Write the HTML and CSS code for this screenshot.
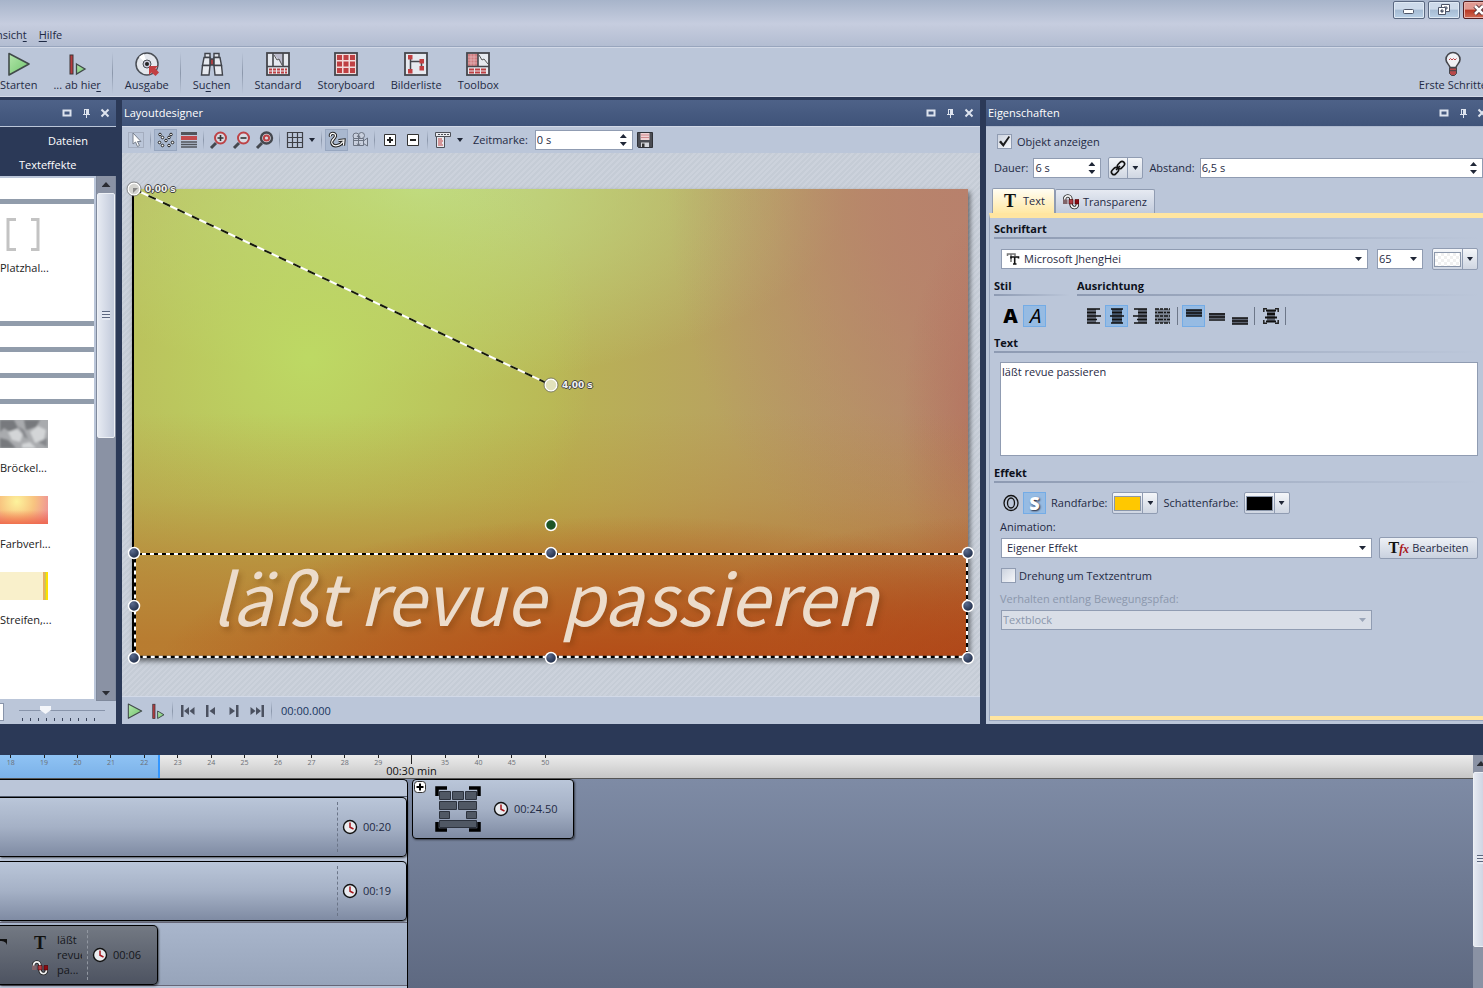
FILE: index.html
```html
<!DOCTYPE html>
<html lang="de">
<head>
<meta charset="utf-8">
<title>Layoutdesigner</title>
<link rel="stylesheet" href="styles.css">
</head>
<body>
<svg class="defs" aria-hidden="true">
  <defs>
    <linearGradient id="green" x1="0" y1="0" x2="1" y2="1"><stop offset="0" stop-color="#b4e6ab"/><stop offset="1" stop-color="#6fc46c"/></linearGradient>
    <radialGradient id="navy" cx=".35" cy=".3" r=".8"><stop offset="0" stop-color="#5a6b8e"/><stop offset="1" stop-color="#18243f"/></radialGradient>
    <symbol id="play" viewBox="0 0 24 24"><path d="M2 1.500 22 12 2 23Z" fill="url(#green)" stroke="#414a4a" stroke-width="1.600" stroke-linejoin="round"/></symbol>
    <symbol id="playfrom" viewBox="0 0 24 24"><rect x="5" y="3" width="3" height="19" fill="#b83c3f" stroke="#3d3437"/><path d="M11.500 12 20 17 11.500 22Z" fill="url(#green)" stroke="#414a4a" stroke-width="1.300"/></symbol>
    <symbol id="max" viewBox="0 0 12 12"><rect x="2.500" y="3.500" width="7" height="5" fill="none" stroke="#dde3ee" stroke-width="2"/></symbol>
    <symbol id="pin" viewBox="0 0 12 12"><path d="M4 2h5v5h1v1H3V7h1ZM6 8h1v3H6Z" fill="#dde3ee"/><path d="M5.500 3v4" stroke="#455a80"/></symbol>
    <symbol id="close" viewBox="0 0 12 12"><path d="M2.500 2.500 9.500 9.500M9.500 2.500 2.500 9.500" stroke="#dde3ee" stroke-width="2"/></symbol>
    <symbol id="clock" viewBox="0 0 16 16"><circle cx="8" cy="8" r="6.500" fill="#e9ebef" stroke="#111" stroke-width="1.400"/><path d="M8 3.500V8.200L11.500 10" fill="none" stroke="#a8171c" stroke-width="1.500"/></symbol>
    <symbol id="wave" viewBox="0 0 16 16"><path d="M1.500 6C1.500 .5 8 .5 8 6v3c0 6 6.500 6 6.500 1" fill="none" stroke="#222" stroke-width="3.400"/><path d="M1.500 6C1.500 .5 8 .5 8 6v3c0 6 6.500 6 6.500 1" fill="none" stroke="#f2f2f2" stroke-width="1.800"/><path d="M0 5.500h4.500V10H0Z" fill="#80656a"/><path d="M6 5.500h4V10H6Z" fill="#b03a40" stroke="#400" stroke-width=".6"/><path d="M12 5.500h4V10h-4Z" fill="#8c0a12" stroke="#400" stroke-width=".6"/></symbol>
    <symbol id="handle" viewBox="0 0 14 14"><circle cx="7" cy="7" r="5.500" fill="url(#navy)" stroke="#fff" stroke-width="1.500"/></symbol>
  </defs>
</svg>

<header class="top">
  <nav class="menu"><a href="#">nsich<u>t</u></a><a href="#"><u>H</u>ilfe</a></nav>
  <div class="winbtns">
    <button class="win" aria-label="Minimieren"><svg width="14" height="12" viewBox="0 0 14 12"><rect x="1.500" y="5.500" width="10" height="4" rx="1" fill="#fff" stroke="#4d5568"/></svg></button>
    <button class="win" aria-label="Wiederherstellen"><svg width="14" height="12" viewBox="0 0 14 12"><path d="M4.500 .5h8v7h-8ZM7 3h3v2H7Z" fill="#fff" fill-rule="evenodd" stroke="#4d5568"/><path d="M1.500 3.500h7v7h-7ZM4 6h2v2H4Z" fill="#fff" fill-rule="evenodd" stroke="#4d5568"/></svg></button>
    <button class="win red" aria-label="Schließen"><svg width="14" height="12" viewBox="0 0 14 12"><path d="m3 2 8 8M11 2l-8 8" stroke="#54343a" stroke-width="4.500"/><path d="m3 2 8 8M11 2l-8 8" stroke="#fff" stroke-width="2.500"/></svg></button>
  </div>
</header>

<div class="toolbar">
  <button class="tool"><svg width="24" height="24"><use href="#play"/></svg><span>Starten</span></button>
  <button class="tool"><svg width="24" height="24"><use href="#playfrom"/></svg><span>... ab hie<u>r</u></span></button>
  <i class="sep"></i>
  <button class="tool"><svg width="24" height="24" viewBox="0 0 24 24"><circle cx="12" cy="12" r="11" fill="#e4e7ed" stroke="#4a4e55" stroke-width="1.500"/><path d="M12 12 4 5a11 11 0 0 1 5-3ZM12 12l8 7 2-4Z" fill="#fff"/><circle cx="12" cy="12" r="4" fill="#ccd" stroke="#4a4e55"/><circle cx="12" cy="12" r="2" fill="#222"/><path d="M14 14h9l-2.500 2.500 3.500 4-3.500 3.500-4-3.500-2.500 2.500Z" fill="#c23f42"/></svg><span>Aus<u>g</u>abe</span></button>
  <i class="sep"></i>
  <button class="tool"><svg width="24" height="24" viewBox="0 0 24 24" fill="#e6e9ef" stroke="#3f4249" stroke-width="1.400"><path d="M5 1.500h5v4H5ZM14 1.500h5v4h-5Z"/><path d="M4 5.500h6v8H2.500ZM14 5.500h6l1.500 8H14Z"/><path d="M2.500 13.500H10L9 23H1.500ZM14 13.500h7.500l1 9.500H15Z"/><path d="M10.500 7h3v6h-3Z" fill="#c23f42"/></svg><span>Su<u>c</u>hen</span></button>
  <i class="sep"></i>
  <button class="tool"><svg width="24" height="24" viewBox="0 0 24 24"><rect x="1" y="1" width="22" height="22" fill="#e6e9ef" stroke="#45464c" stroke-width="1.800"/><path d="M7 1v13M17 1v13M1 14.500h22" stroke="#45464c" stroke-width="1.600"/><path d="M8 2h8v11Z" fill="#bbc"/><path d="m8 3 3 5 2-1 3 6" fill="none" stroke="#555"/><path d="M3 17.500h18M3 20.500h18" stroke="#bf4043" stroke-width="2" stroke-dasharray="3 1"/></svg><span>Standard</span></button>
  <button class="tool"><svg width="24" height="24" viewBox="0 0 24 24"><rect x="1" y="1" width="22" height="22" fill="#f1dada" stroke="#45464c" stroke-width="1.800"/><path d="M5.500 3v18M12 3v18M18.500 3v18" stroke="#bf4043" stroke-width="5" stroke-dasharray="5 1.500"/></svg><span>Storyboard</span></button>
  <button class="tool"><svg width="24" height="24" viewBox="0 0 24 24"><rect x="1" y="1" width="22" height="22" fill="#e6e9ef" stroke="#45464c" stroke-width="1.800"/><path d="M6.500 5v14M6.500 9.500h11V15" fill="none" stroke="#45464c" stroke-width="1.500"/><path d="M4 3h4.500v4.500H4ZM4 17h4.500v4.500H4ZM15.500 7H20v4.500h-4.500ZM15.500 14H20v4.500h-4.500Z" fill="#c23f42"/></svg><span>Bilderliste</span></button>
  <button class="tool"><svg width="24" height="24" viewBox="0 0 24 24"><rect x="1" y="1" width="22" height="22" fill="#e6e9ef" stroke="#45464c" stroke-width="1.800"/><path d="M2 2h10v12H2Z" fill="#cf7d80"/><path d="M2 5h10M2 8h10M2 11h10M5 2v12M8 2v12" stroke="#eac4c6" stroke-width=".6"/><path d="M12 1v13M1 14.500h22" stroke="#45464c" stroke-width="1.600"/><path d="m13 3 3 5 2-1 4 5" fill="none" stroke="#555"/><path d="M3 17.500h18M3 20.500h18" stroke="#bf4043" stroke-width="2" stroke-dasharray="5 1"/></svg><span>Toolbox</span></button>
  <button class="tool last"><svg width="24" height="24" viewBox="0 0 24 24"><path d="M9 15.500C8 12 5 11 5 7.500a7 7 0 0 1 14 0c0 3.500-3 4.500-4 8Z" fill="#f0f1f5" stroke="#45464c" stroke-width="1.600"/><path d="m8 8 1.500-1.500L11 8l1.500-1.500L14 8l1.500-1.500" fill="none" stroke="#bf4043"/><path d="M8.500 16h7v5.500l-2 2h-3l-2-2Z" fill="#b8494b" stroke="#45464c"/><path d="M9 18.700h6" stroke="#45464c"/></svg><span>Erste Schritte</span></button>
</div>

<main class="work">
  <section class="panel left">
    <div class="title"><span></span><div class="tbtns"><button aria-label="Maximieren"><svg width="12" height="12"><use href="#max"/></svg></button><button aria-label="Anheften"><svg width="12" height="12"><use href="#pin"/></svg></button><button aria-label="Schließen"><svg width="12" height="12"><use href="#close"/></svg></button></div></div>
    <nav class="cats"><a href="#" class="c1">Dateien</a><a href="#" class="c2">Texteffekte</a></nav>
    <div class="lib">
      <div class="list">
        <div class="grp small"></div>
        <div class="grp place"><svg width="48" height="38" viewBox="0 0 48 38"><path d="M16 3.500H8v30h8M31 3.500h7v30h-7" fill="none" stroke="#c3c3c3" stroke-width="3"/></svg><span>Platzhal...</span></div>
        <div class="grp small"></div>
        <div class="grp small"></div>
        <div class="grp small"></div>
        <div class="grp items">
          <figure><svg class="thumb" width="48" height="28" viewBox="0 0 48 28"><defs><filter id="soft"><feGaussianBlur stdDeviation="1"/></filter></defs><rect width="48" height="28" fill="#a9abae"/><g filter="url(#soft)"><path d="M0 0h14l4 8-8 4-6-4-4 4ZM0 18l8 2 8 8H0ZM24 0h16l-4 7-10 3Z" fill="#77797d"/><path d="M8 12l9-3 6 5-3 8-8-2ZM30 12l8-6 8 4-2 10-9 3ZM22 24l8-2 6 6H22Z" fill="#d3d5d7"/><path d="M18 6l6 4 4 9-4-2ZM38 22l9-4v9Z" fill="#85878b"/></g></svg><figcaption>Bröckel...</figcaption></figure>
          <figure><div class="thumb warm"></div><figcaption>Farbverl...</figcaption></figure>
          <figure><div class="thumb stripe"></div><figcaption>Streifen,...</figcaption></figure>
        </div>
      </div>
      <div class="vbar"><button class="arr up" aria-label="Nach oben"></button><div class="vthumb"><i></i></div><button class="arr down" aria-label="Nach unten"></button></div>
    </div>
    <div class="lfoot"><i class="box"></i><div class="zoom"><input type="range" min="0" max="100" value="28" aria-label="Vorschaugröße"><i class="ticks"></i></div></div>
  </section>

  <section class="panel center">
    <div class="title"><span>Layoutdesigner</span><div class="tbtns"><button aria-label="Maximieren"><svg width="12" height="12"><use href="#max"/></svg></button><button aria-label="Anheften"><svg width="12" height="12"><use href="#pin"/></svg></button><button aria-label="Schließen"><svg width="12" height="12"><use href="#close"/></svg></button></div></div>
    <div class="bar">
      <button class="ib" aria-label="Auswahl"><svg width="16" height="16" viewBox="0 0 16 16"><rect x=".5" y=".5" width="15" height="15" fill="none" stroke="#8c95a5" stroke-dasharray="1 1"/><path d="M5 1v11l2.500-2 2 4.500 2-1-2-4H13Z" fill="#fff" stroke="#777f8d"/></svg></button>
      <i class="sep"></i>
      <button class="ib on" aria-label="Punkte"><svg width="18" height="16" viewBox="0 0 18 16" fill="#fff" stroke="#222"><circle cx="3" cy="2.500" r="1.300"/><circle cx="14" cy="2.500" r="1.300"/><circle cx="5.500" cy="5.500" r="1.300"/><circle cx="12" cy="5.500" r="1.300"/><circle cx="9" cy="8.500" r="1.300"/><circle cx="2.500" cy="10.500" r="1.300"/><circle cx="15.500" cy="10.500" r="1.300"/><circle cx="5.500" cy="13.500" r="1.300"/><circle cx="12" cy="13.500" r="1.300"/></svg></button>
      <button class="ib" aria-label="Spuren"><svg width="16" height="16" viewBox="0 0 16 16"><path d="M0 0h16v3H0Z" fill="#51545b"/><path d="M0 4h16v4H0Z" fill="#c34a4d"/><path d="M0 10h16M0 12.500h16M0 15h16" stroke="#51545b" stroke-width="1.500"/></svg></button>
      <i class="sep"></i>
      <button class="ib" aria-label="Vergrößern"><svg width="18" height="18" viewBox="0 0 18 18"><path d="m6 12-5 5" stroke="#45484f" stroke-width="3"/><circle cx="10.500" cy="7" r="5.500" fill="#d8dbe3" stroke="#bd4246" stroke-width="2"/><path d="M7.500 7h6M10.500 4v6" stroke="#333" stroke-width="1.600"/></svg></button>
      <button class="ib" aria-label="Verkleinern"><svg width="18" height="18" viewBox="0 0 18 18"><path d="m6 12-5 5" stroke="#45484f" stroke-width="3"/><circle cx="10.500" cy="7" r="5.500" fill="#d8dbe3" stroke="#bd4246" stroke-width="2"/><path d="M7.500 7h6" stroke="#333" stroke-width="1.600"/></svg></button>
      <button class="ib" aria-label="Einpassen"><svg width="18" height="18" viewBox="0 0 18 18"><path d="m6 12-5 5" stroke="#45484f" stroke-width="3"/><circle cx="10.500" cy="7" r="5.500" fill="#d8dbe3" stroke="#45484f" stroke-width="2.400"/><circle cx="10.500" cy="7" r="2.600" fill="none" stroke="#bd4246" stroke-width="2"/></svg></button>
      <i class="sep"></i>
      <button class="ib" aria-label="Raster"><svg width="16" height="16" viewBox="0 0 16 16"><path d="M.5 .5h15v15H.5ZM5.500 0v16M10.500 0v16M0 5.500h16M0 10.500h16" fill="none" stroke="#3e4046" stroke-width="1.200"/></svg></button>
      <button class="car" aria-label="Rasteroptionen"></button>
      <i class="sep"></i>
      <button class="ib on" aria-label="Pfad"><svg width="18" height="16" viewBox="0 0 18 16"><path d="M2.500 4.500C1 .5 8 .5 7.500 4 7 7 2.500 8 4 11.500s8 3 11-2M10.500 8.500l5.500-.5-.5 5.500" fill="none" stroke="#222" stroke-width="3.200"/><path d="M2.500 4.500C1 .5 8 .5 7.500 4 7 7 2.500 8 4 11.500s8 3 11-2M10.500 8.500l5.500-.5-.5 5.500" fill="none" stroke="#fff" stroke-width="1.200"/></svg></button>
      <button class="ib" aria-label="Kamera"><svg width="16" height="16" viewBox="0 0 16 16" fill="#c9d0de" stroke="#6b7382"><circle cx="4" cy="4" r="3"/><circle cx="9.500" cy="3.500" r="3"/><path d="M1.500 6.500h10v7h-10ZM11.500 9l4-3v8l-4-2.500"/><path d="M2 8.500h9M6.500 3v10M5 5l1.500-2L8 5M5 11.500l1.500 2 1.500-2" fill="none"/></svg></button>
      <i class="sep"></i>
      <button class="ib" aria-label="Punkt hinzufügen"><svg width="12" height="12" viewBox="0 0 12 12"><path d="M.5.500h11v11H.5Z" fill="#fff" stroke="#333"/><path d="M3 6h6M6 3v6" stroke="#222" stroke-width="2"/></svg></button>
      <button class="ib" aria-label="Punkt entfernen"><svg width="12" height="12" viewBox="0 0 12 12"><path d="M.5.500h11v11H.5Z" fill="#fff" stroke="#333"/><path d="M3 6h6" stroke="#222" stroke-width="2"/></svg></button>
      <i class="sep"></i>
      <button class="ib" aria-label="Ausrichten"><svg width="16" height="16" viewBox="0 0 16 16" fill="#e9ebf0" stroke="#4d5058"><path d="M.5.500h15v4H.5Z"/><path d="M3 2.500h11" stroke-dasharray="2 1"/><path d="M1.500 4.500h8v11h-8Z"/><path d="M3 7h4M3 9h5M3 11h4M3 13h5" stroke="#bf4043"/></svg></button>
      <button class="car" aria-label="Ausrichtungsoptionen"></button>
      <label class="zm" for="zeit">Zeitmarke:</label>
      <span class="spin w1"><input id="zeit" type="text" value="0 s"><i></i></span>
      <button class="ib" aria-label="Speichern"><svg width="16" height="16" viewBox="0 0 16 16"><path d="M.5.500h15v15h-14l-1-1Z" fill="#4a4c53" stroke="#303238"/><path d="M3.500 1h9v7h-9Z" fill="#f1d3d5"/><path d="M4 3h8M4 5.500h8" stroke="#d08a8e"/><path d="M4 10.500h8V15H4Z" fill="#d4d6db"/><path d="M5 11.500h2.500V15H5Z" fill="#333"/></svg></button>
    </div>
    <div class="stage">
      <div class="picture">
        <svg class="path" width="100%" height="100%" aria-hidden="true"><line x1="0" y1="0" x2="50%" y2="42%" stroke="#fff" stroke-width="2"/><line x1="0" y1="0" x2="50%" y2="42%" stroke="#161a08" stroke-width="2" stroke-dasharray="8 8" stroke-dashoffset="-16"/></svg>
        <svg class="node n0" width="16" height="16" viewBox="0 0 16 16"><circle cx="8" cy="8" r="6" fill="#d4d4d0" stroke="#fff" stroke-width="1.500"/><circle cx="8" cy="8" r="7" fill="none" stroke="#666" stroke-width=".7"/><path d="M7 7h5l-5 5Z" fill="#888"/></svg><span class="time t0">0,00 s</span>
        <svg class="node n1" width="16" height="16" viewBox="0 0 16 16"><circle cx="8" cy="8" r="6" fill="#e2e2bc" stroke="#fff" stroke-width="1.500"/><circle cx="8" cy="8" r="7" fill="none" stroke="#666" stroke-width=".7"/></svg><span class="time t1">4,00 s</span>
        <svg class="node rot" width="14" height="14" viewBox="0 0 14 14"><circle cx="7" cy="7" r="5.500" fill="#1d5527" stroke="#fff" stroke-width="1.500"/></svg>
        <div class="selection">
          <svg class="marq" width="100%" height="100%" aria-hidden="true"><rect width="100%" height="100%" fill="none" stroke="#000" stroke-width="4"/><rect width="100%" height="100%" fill="none" stroke="#fff" stroke-width="4" stroke-dasharray="4 4"/></svg>
          <p class="caption">läßt revue passieren</p>
          <svg class="h a" width="14" height="14"><use href="#handle"/></svg><svg class="h b" width="14" height="14"><use href="#handle"/></svg><svg class="h c" width="14" height="14"><use href="#handle"/></svg><svg class="h d" width="14" height="14"><use href="#handle"/></svg><svg class="h e" width="14" height="14"><use href="#handle"/></svg><svg class="h f" width="14" height="14"><use href="#handle"/></svg><svg class="h g" width="14" height="14"><use href="#handle"/></svg><svg class="h i" width="14" height="14"><use href="#handle"/></svg>
        </div>
      </div>
    </div>
    <div class="player">
      <button class="ib" aria-label="Abspielen"><svg width="16" height="16"><use href="#play"/></svg></button>
      <button class="ib" aria-label="Ab hier abspielen"><svg width="18" height="18"><use href="#playfrom"/></svg></button>
      <i class="sep"></i>
      <button class="ib" aria-label="Anfang"><svg width="14" height="12" viewBox="0 0 14 12" fill="#4b5160"><path d="M0 0h2.500v12H0ZM8 2v8L3 6ZM13.500 2v8l-5-4Z"/></svg></button>
      <button class="ib" aria-label="Zurück"><svg width="10" height="12" viewBox="0 0 10 12" fill="#4b5160"><path d="M0 0h2.500v12H0ZM9 2v8L3.500 6Z"/></svg></button>
      <button class="ib" aria-label="Vor"><svg width="10" height="12" viewBox="0 0 10 12" fill="#4b5160"><path d="M7 0h2.500v12H7ZM.5 2v8L6 6Z"/></svg></button>
      <button class="ib" aria-label="Ende"><svg width="14" height="12" viewBox="0 0 14 12" fill="#4b5160"><path d="M11.500 0H14v12h-2.500ZM.5 2v8l5-4ZM6 2v8l5-4Z"/></svg></button>
      <i class="sep"></i>
      <span class="tc">00:00.000</span>
    </div>
  </section>

  <section class="panel right">
    <div class="title"><span>Eigenschaften</span><div class="tbtns"><button aria-label="Maximieren"><svg width="12" height="12"><use href="#max"/></svg></button><button aria-label="Anheften"><svg width="12" height="12"><use href="#pin"/></svg></button><button aria-label="Schließen"><svg width="12" height="12"><use href="#close"/></svg></button></div></div>
    <div class="props">
      <label class="chk show"><input type="checkbox" checked>Objekt anzeigen</label>
      <div class="row dur">
        <label for="dauer">Dauer:</label><span class="spin w2"><input id="dauer" type="text" value="6 s"><i></i></span>
        <button class="split" aria-label="Verketten"><svg width="18" height="18" viewBox="0 0 18 18" fill="none"><g stroke="#111" stroke-width="1.600"><rect x="-4" y="-2.500" width="8" height="5" rx="2.500" transform="translate(12 6) rotate(-45)"/><rect x="-4" y="-2.500" width="8" height="5" rx="2.500" transform="translate(6 12) rotate(-45)"/></g><path d="m7 11 4-4" stroke="#111" stroke-width="1.600"/></svg><i class="dd"></i></button>
        <label for="abst">Abstand:</label><span class="spin grow"><input id="abst" type="text" value="6,5 s"><i></i></span>
      </div>
      <div class="tabs"><button class="tab act"><b class="serif">T</b>Text</button><button class="tab"><svg width="16" height="16"><use href="#wave"/></svg>Transparenz</button></div>
      <div class="page">
        <h2>Schriftart</h2>
        <div class="row font">
          <span class="sel grow"><svg class="tt" width="12" height="12" viewBox="0 0 12 12"><path d="M.5 3V1H8v2M4 1v8" fill="none" stroke="#777" stroke-width="1.500"/><path d="M4 5.500V4h7.500v1.500M7.700 4v7M6 11h3.500" fill="none" stroke="#111" stroke-width="1.600"/></svg><select class="withicon" aria-label="Schriftart"><option>Microsoft JhengHei</option></select></span>
          <span class="sel size"><select aria-label="Schriftgröße"><option>65</option></select></span>
          <button class="split" aria-label="Textfarbe"><i class="sw check"></i><i class="dd"></i></button>
        </div>
        <div class="cols">
          <div><h2>Stil</h2><div class="row btns st"><button class="ib fat">A</button><button class="ib sel1 ita">A</button></div></div>
          <div><h2>Ausrichtung</h2><div class="row btns al">
            <button class="ib" aria-label="Links"><svg width="14" height="16" viewBox="0 0 14 16"><path d="M0 1h9v14H0Z" fill="#5d6370"/><path d="M0 1h13M0 4.500h9M0 8h14M0 11.500h10M0 15h13" stroke="#101010" stroke-width="1.700"/></svg></button>
            <button class="ib sel1" aria-label="Zentriert"><svg width="14" height="16" viewBox="0 0 14 16"><path d="M2 1h10v14H2Z" fill="#44566c"/><path d="M1 1h12M2 4.500h10M0 8h14M2 11.500h10M1 15h12" stroke="#101010" stroke-width="1.700"/></svg></button>
            <button class="ib" aria-label="Rechts"><svg width="14" height="16" viewBox="0 0 14 16"><path d="M5 1h9v14H5Z" fill="#5d6370"/><path d="M1 1h13M5 4.500h9M0 8h14M4 11.500h10M1 15h13" stroke="#101010" stroke-width="1.700"/></svg></button>
            <button class="ib" aria-label="Blocksatz"><svg width="15" height="16" viewBox="0 0 15 16"><path d="M0 1h15v14H0Z" fill="#7c8492"/><path d="M0 1h15M0 8h15M0 15h15" stroke="#151515" stroke-width="1.700" stroke-dasharray="4 1 3 1"/><path d="M0 4.500h15M0 11.500h15" stroke="#151515" stroke-width="1.700" stroke-dasharray="2 1 5 1"/></svg></button>
            <i class="bar1"></i>
            <button class="ib sel1" aria-label="Oben"><svg width="16" height="16" viewBox="0 0 16 16"><path d="M0 2h16v6H0Z" fill="#44566c"/><path d="M0 2h16M0 5h16M0 8h16" stroke="#101010" stroke-width="1.600"/></svg></button>
            <button class="ib" aria-label="Mitte"><svg width="16" height="16" viewBox="0 0 16 16"><path d="M0 5h16v6H0Z" fill="#5d6370"/><path d="M0 6h16M0 9h16M0 12h16" stroke="#101010" stroke-width="1.600"/></svg></button>
            <button class="ib" aria-label="Unten"><svg width="16" height="16" viewBox="0 0 16 16"><path d="M0 10h16v6H0Z" fill="#5d6370"/><path d="M0 10h16M0 13h16M0 16h16" stroke="#101010" stroke-width="1.600"/></svg></button>
            <i class="bar1"></i>
            <button class="ib" aria-label="Einpassen"><svg width="16" height="16" viewBox="0 0 16 16"><path d="M.8 4V.8H4M12 .8h3.200V4M.8 12v3.200H4M12 15.200h3.200V12" fill="none" stroke="#222" stroke-width="1.500"/><path d="M4 2h8v12H4Z" fill="#5d6370"/><path d="M3 2.500h10M4 6h8M2 9.500h12M3 13.500h10" stroke="#101010" stroke-width="1.800"/></svg></button>
            <i class="bar1"></i>
          </div></div>
        </div>
        <h2>Text</h2>
        <textarea aria-label="Text">läßt revue passieren</textarea>
        <h2>Effekt</h2>
        <div class="row eff">
          <button class="ib" aria-label="Rand"><svg width="16" height="18" viewBox="0 0 16 18" fill="none" stroke="#111"><ellipse cx="8" cy="9" rx="7" ry="7.500" stroke-width="1.300"/><ellipse cx="8" cy="9" rx="3.500" ry="5" stroke-width="1.300"/></svg></button><button class="ib sel1 shadow">S</button>
          <span class="lb">Randfarbe:</span><button class="split" aria-label="Randfarbe"><i class="sw gold"></i><i class="dd"></i></button>
          <span class="lb">Schattenfarbe:</span><button class="split" aria-label="Schattenfarbe"><i class="sw black"></i><i class="dd"></i></button>
        </div>
        <label class="cap" for="anim">Animation:</label>
        <div class="row an"><span class="sel grow"><select id="anim" class="ind"><option>Eigener Effekt</option></select></span><button class="push"><span class="tfx">T<em>fx</em></span>Bearbeiten</button></div>
        <label class="chk rotc"><input type="checkbox">Drehung um Textzentrum</label>
        <label class="cap off" for="verh">Verhalten entlang Bewegungspfad:</label>
        <div class="row an"><span class="sel grow dis"><select id="verh" disabled><option>Textblock</option></select></span><span class="ghost"></span></div>
      </div>
    </div>
  </section>
</main>

<section class="timeline">
  <div class="tl">
    <div class="ruler">
      <div class="played"></div>
      <div class="marks"><span>18</span><span>19</span><span>20</span><span>21</span><span>22</span><span>23</span><span>24</span><span>25</span><span>26</span><span>27</span><span>28</span><span>29</span><span class="major">00:30 min</span><span>35</span><span>40</span><span>45</span><span>50</span></div>
    </div>
    <div class="tracks">
      <div class="group">
        <div class="strip"></div>
        <div class="clip full"><div class="dur1"><svg width="16" height="16"><use href="#clock"/></svg>00:20</div></div>
        <div class="clip full"><div class="dur1"><svg width="16" height="16"><use href="#clock"/></svg>00:19</div></div>
        <div class="lane"><div class="clip dark"><svg class="tend" width="8" height="10" viewBox="0 0 8 10"><path d="M0 1h7v6C6 4 4 3 0 3Z" fill="#111"/></svg><div class="ic"><b class="serif">T</b><svg width="16" height="16"><use href="#wave"/></svg></div><p>läßt<br>revue<br>pa...</p><div class="dur1"><svg width="16" height="16"><use href="#clock"/></svg>00:06</div></div></div>
      </div>
      <div class="clip next">
        <svg class="plus" width="12" height="12" viewBox="0 0 12 12"><rect x=".5" y=".5" width="11" height="11" rx="3" fill="#fff" stroke="#333"/><path d="M2.500 6h7M6 2.500v7" stroke="#000" stroke-width="2"/></svg>
        <svg width="46" height="46" viewBox="0 0 46 46"><path d="M2 10V2h10M34 2h10v8M2 36v8h10M34 44h10v-8" fill="none" stroke="#000" stroke-width="3.500"/><g fill="#505864" stroke="#2c323d"><path d="M4.500 5.500h11v8h-11ZM17.500 5.500h11v8h-11ZM30.500 5.500h11v8h-11ZM4.500 15.500h17v8h-17ZM23.500 15.500h18v8h-18ZM4.500 25.500h10v7h-10ZM31.500 25.500h10v7h-10ZM4.500 34.500h37v7h-37Z"/></g></svg>
        <div class="dur2"><svg width="16" height="16"><use href="#clock"/></svg>00:24.50</div>
      </div>
    </div>
  </div>
  <div class="tbar"><button class="arr up" aria-label="Nach oben"></button><div class="vthumb"><i></i></div></div>
</section>
</body>
</html>
```
FILE: styles.css
```css
* { box-sizing: border-box; }
html, body { height: 100%; }
body {
  margin: 0;
  display: flex;
  flex-direction: column;
  overflow: hidden;
  background: #2b3957;
  color: #1f2a44;
  font: 11px/14px "Open Sans", "Noto Sans", sans-serif;
}
button, input, select, textarea { font: inherit; color: inherit; margin: 0; border-radius: 0; }
button { padding: 0; border: 0; background: none; display: flex; align-items: center; justify-content: center; }
a { color: inherit; text-decoration: none; }
svg { display: block; flex: none; overflow: visible; }
.defs { width: 0; height: 0; position: absolute; }
u { text-underline-offset: 2px; }

/* window frame and menu */
.top {
  flex: none;
  height: 47px;
  display: flex;
  justify-content: space-between;
  background: linear-gradient(#a7b4ca, #c6cddf 52%, #c3cadc 60%, #b3bdd2);
  border-bottom: 1px solid #98a5bd;
  overflow: hidden;
}
.menu { display: flex; gap: 12px; padding-top: 28px; margin-left: -4px; }
.winbtns { display: flex; gap: 3px; margin-right: -12px; }
.win {
  width: 32px;
  height: 18px;
  margin-top: 1px;
  border: 1px solid #5a6881;
  border-radius: 2px;
  background: linear-gradient(#cddaea 45%, #a5bbd3 50%, #b9d0e6);
  box-shadow: inset 0 0 0 1px #dfe9f4;
}
.red { background: linear-gradient(#e09a92 45%, #b93622 50%, #cf6a54); border-color: #541d20; box-shadow: inset 0 0 0 1px #eab4ad; }

/* main toolbar */
.toolbar {
  flex: none;
  height: 50px;
  display: flex;
  align-items: flex-start;
  background: #bbc6d9;
  border-top: 1px solid #d2d9e7;
  border-bottom: 1px solid #d2d9e7;
  padding-top: 4px;
  margin-left: -8px;
  margin-right: -12px;
}
.tool { flex-direction: column; gap: 2px; padding: 0 8px; white-space: nowrap; }
.last { margin-left: auto; }
.sep {
  flex: none;
  width: 1px;
  margin: 0 3px;
  height: 20px;
  background: linear-gradient(#bbc6d900, #8b97ab, #bbc6d900);
}
.toolbar .sep { height: 42px; margin-right: 4px; }

/* three panels */
.work { flex: 1; min-height: 0; display: flex; gap: 6px; padding-top: 3px; }
.panel { display: flex; flex-direction: column; min-height: 0; background: #bbc6d9; overflow: hidden; }
.left { width: 116px; flex: none; }
.center { flex: 1; min-width: 0; }
.right { width: 497px; flex: none; }
.title {
  flex: none;
  height: 26px;
  display: flex;
  align-items: center;
  justify-content: space-between;
  padding: 0 2px;
  color: #fff;
  background: linear-gradient(#4e6288, #3f5379);
}
.right .title { margin-right: -10px; }
.tbtns { display: flex; }
.tbtns button { width: 19px; height: 20px; }

.cats { flex: none; height: 50px; background: #2b3957; border-top: 1px solid #bbc6d9; color: #fff; display: flex; flex-direction: column; gap: 10px; padding-top: 7px; }
.c1 { padding-left: 48px; }
.c2 { padding-left: 19px; }
.lib { flex: 1; min-height: 0; display: flex; justify-content: space-between; }
.list { width: 94px; margin-top: 2px; margin-bottom: 2px; background: #fff; color: #222; display: flex; flex-direction: column; overflow: hidden; }
.grp { border-bottom: 5px solid #919cab; white-space: nowrap; }
.small { height: 26px; flex: none; }
.place { height: 122px; flex: none; padding-top: 12px; }
.place span { display: block; margin-top: 7px; }
.items { flex: 1; border: 0; padding-top: 16px; display: flex; flex-direction: column; gap: 21px; }
figure { margin: 0; display: flex; flex-direction: column; gap: 13px; }
figcaption { line-height: 14px; }
.thumb { width: 48px; height: 28px; overflow: hidden; }
.warm { background: linear-gradient(#ee604000 50%, #ee6040cc), radial-gradient(circle at 35% 20%, #fdf39c, #f8c480 45%, #ee8f98 90%); }
.stripe { background: linear-gradient(90deg, #f9f0cb 43px, #e9b060 43px 45px, #c5cf50 45px 46px, #ffe000 46px); }

.vbar { width: 20px; display: flex; flex-direction: column; background: #8a92a4; border: 1px solid #7f899c; border-top: 0; }
.arr { height: 17px; flex: none; }
.arr::before { content: ""; width: 9px; height: 5px; background: #2a2c33; clip-path: polygon(50% 0, 100% 100%, 0 100%); }
.down::before { clip-path: polygon(0 0, 100% 0, 50% 100%); }
.down { margin-top: auto; height: 14px; }
.vthumb {
  height: 245px;
  display: flex;
  align-items: center;
  justify-content: center;
  border: 1px solid #eef1f6;
  border-radius: 2px;
  background: linear-gradient(90deg, #e6eaf2, #c2cadb);
}
.vthumb i { width: 8px; height: 9px; background: repeating-linear-gradient(#5d6880 0 1px, #e6eaf2 1px 3px); }
.lfoot { flex: none; height: 23px; display: flex; gap: 15px; align-items: flex-start; padding-top: 2px; }
.box { width: 4px; height: 18px; background: #fff; border: 1px solid #8894aa; border-left: 0; }
.zoom { width: 86px; }
.zoom input { appearance: none; display: block; width: 86px; height: 14px; background: linear-gradient(#8894aa, #8894aa) center / 100% 1px no-repeat; }
.zoom input::-webkit-slider-thumb { appearance: none; width: 11px; height: 8px; background: #f4f6fa; clip-path: polygon(0 0, 100% 0, 100% 50%, 50% 100%, 0 50%); }
.ticks { display: block; margin: 1px 0 0 3px; height: 3px; width: 80px; background: repeating-linear-gradient(90deg, #39435a 0 1px, #bbc6d9 1px 8px); }

/* layout designer */
.bar { flex: none; height: 27px; display: flex; align-items: center; padding-left: 2px; border-top: 1px solid #d2d9e7; }
.ib { flex: none; width: 23px; height: 22px; }
.on { background: #a9b8cf; border: 1px solid #98a7c0; }
.car { width: 12px; height: 22px; }
.car::before, .dd::before { content: ""; width: 6px; height: 4px; background: #1f2636; clip-path: polygon(0 0, 100% 0, 50% 100%); }
.zm { margin: 0 7px; }
.spin { display: flex; align-items: center; height: 20px; background: #fff; border: 1px solid #909cb2; }
.spin input { flex: 1; min-width: 0; width: 0; border: 0; padding: 0 0 0 1px; background: none; outline: 0; }
.spin i { width: 7px; height: 12px; margin-right: 5px; background: #1f2636; clip-path: polygon(50% 0, 100% 33%, 0 33%, 0 67%, 100% 67%, 50% 100%, 0 67%, 0 33%); }
.w1 { width: 98px; margin-right: 1px; }
.stage { flex: 1; min-height: 0; display: flex; padding: 36px 12px 38px; background: repeating-linear-gradient(135deg, #ccd2dc 0 2px, #c5ccd6 2px 4px); }
.picture {
  flex: 1;
  position: relative;
  border-left: 2px solid #000;
  border-bottom: 2px solid #000;
  margin-left: -2px;
  box-shadow: 2px 3px 5px #0008;
  background:
    radial-gradient(ellipse 58% 36% at 60% 106%, #b34614, #b3461480 55%, #b3461400),
    radial-gradient(ellipse 44% 36% at 104% 106%, #ad3f18, #ad3f1890 50%, #ad3f1800),
    linear-gradient(#b8741c00 48%, #b8782a40 66%, #b8762c99 80%, #b8762ce6 97%),
    radial-gradient(ellipse 11% 48% at 103% 52%, #b4625899, #b4625800),
    radial-gradient(ellipse 38% 90% at 102% 0, #b8806c, #b8806cc0 35%, #b8806c50 68%, #b8806c00),
    radial-gradient(ellipse 34% 58% at 21% 36%, #bdd964, #bdd96480 50%, #bdd96400),
    radial-gradient(ellipse 52% 42% at 34% 0, #c1db88, #c1db8880 50%, #c1db8800),
    linear-gradient(90deg, #b9b458, #b9b454 50%, #b8a260 72%, #b4906a);
}
.path { position: absolute; inset: 0; }
.node, .time, .h { position: absolute; }
.node { transform: translate(-50%, -50%); }
.n0 { left: 0; top: 0; }
.n1, .rot { left: 50%; }
.n1 { top: 42%; }
.rot { top: 72%; }
.time { font: bold 9px/12px "DejaVu Sans", sans-serif; color: #f2f2f2; text-shadow: 1px 0 #444, -1px 0 #444, 0 1px #444, 0 -1px #444; margin: -6px 0 0 11px; white-space: nowrap; }
.t0 { left: 0; top: 0; }
.t1 { left: 50%; top: 42%; }
.selection { position: absolute; left: 0; right: 0; top: 78%; bottom: -2px; display: flex; align-items: center; justify-content: center; }
.marq { position: absolute; inset: 0; overflow: hidden; }
.caption { margin: 0 12px 22px 0; white-space: nowrap; font: italic 400 71px/90px "Noto Sans CJK JP", sans-serif; color: #ecdccb; text-shadow: 3px 4px 5px #5a2c0040; }
.h { transform: translate(-50%, -50%); }
.a, .d, .f { left: 0; }
.b, .g { left: 50%; }
.c, .e, .i { left: 100%; }
.a, .b, .c { top: 0; }
.d, .e { top: 50%; }
.f, .g, .i { top: 100%; }
.player { flex: none; height: 28px; display: flex; align-items: center; padding-left: 1px; border-top: 1px solid #d2d9e7; }
.tc { color: #18355e; margin-left: 6px; }

/* properties */
.props { flex: 1; min-height: 0; display: flex; flex-direction: column; padding-left: 3px; border-top: 1px solid #aeb9ce; }
.chk { display: flex; align-items: center; gap: 5px; }
.chk input { appearance: none; width: 15px; height: 15px; border: 1px solid #909cb2; background: linear-gradient(135deg, #ccd3df, #f6f7fa); display: flex; align-items: center; justify-content: center; }
.chk input:checked::before { content: ""; width: 11px; height: 11px; background: #1c1c1c; clip-path: polygon(0 55%, 18% 42%, 38% 68%, 88% 0, 100% 8%, 40% 100%); }
.show { margin: 7px 0 0 8px; }
.row { display: flex; align-items: center; }
.grow { flex: 1; min-width: 0; }
.dur { margin: 8px 0 0 5px; height: 22px; gap: 5px; }
.w2 { width: 68px; }
.split { flex: none; height: 22px; border: 1px solid #909cb2; border-radius: 2px; background: linear-gradient(#f4f6f9, #cfd6e2); }
.dur .split { width: 35px; margin: 0 1px 0 2px; }
.dd { width: 15px; height: 20px; border-left: 1px solid #909cb2; display: flex; align-items: center; justify-content: center; }
.sw { width: 27px; height: 15px; margin: 0 1px; border: 1px solid #8b97ab; }
.gold { background: #ffc800; }
.black { background: #000; }
.check { background: repeating-conic-gradient(#fff 0 25%, #f0f0f0 0 50%) 0 0 / 6px 6px; }
.tabs { display: flex; align-items: flex-end; padding-left: 3px; margin-top: 9px; }
.tab { height: 24px; padding: 0 7px; gap: 4px; border: 1px solid #909cb2; border-bottom: 0; border-radius: 2px 2px 0 0; background: linear-gradient(#e6eaf2, #c2cbdc); }
.act { height: 25px; padding: 0 9px 0 11px; gap: 7px; background: linear-gradient(#fffdf3, #ffe8a4); }
.serif { font: bold 18px/18px "Liberation Serif", serif; color: #111; }
.page { flex: 1; min-height: 0; border: 1px solid #98a5bd; border-right: 0; border-top: 5px solid #ffe5a0; box-shadow: inset 0 -4px #ffe5a0; margin-bottom: 3px; padding: 4px 5px 0 4px; }
h2 { margin: 0; font: bold 11px/14px "Open Sans", sans-serif; color: #0d111b; padding-bottom: 1px; border-bottom: 2px solid; border-image: linear-gradient(90deg, #8d9ab2, #bbc6d9) 1; }
.font { gap: 9px; margin: 9px 0 0 7px; }
.sel { position: relative; display: flex; height: 20px; border: 1px solid #909cb2; background: #fff; }
.sel::after { content: ""; position: absolute; right: 5px; top: 7px; width: 7px; height: 4px; background: #1f2636; clip-path: polygon(0 0, 100% 0, 50% 100%); }
.sel select { appearance: none; flex: 1; min-width: 0; border: 0; background: none; padding: 0 16px 0 1px; }
.sel .withicon { padding-left: 22px; }
.sel .ind { padding-left: 5px; }
.tt { position: absolute; left: 5px; top: 3px; }
.size { width: 46px; }
.cols { display: grid; grid-template-columns: 75px 1fr; gap: 8px; margin-top: 9px; }
.btns { height: 22px; margin-top: 9px; }
.st { padding-left: 5px; gap: 1px; }
.al { padding-left: 5px; }
.sel1 { background: #96bbe3; border: 1px solid #74ace6; }
.fat { font: 900 20px/20px "Open Sans", "Noto Sans", sans-serif; color: #000; }
.ita { font: italic 19px/16px "Noto Sans CJK JP", sans-serif; color: #000; padding-bottom: 3px; }
.bar1 { width: 1px; height: 18px; background: #6d7789; margin: 0 4px 0 3px; }
.cols + h2 { margin-top: 9px; }
textarea { display: block; width: calc(100% - 6px); height: 94px; margin: 9px 0 10px 6px; padding: 2px 1px; border: 1px solid #909cb2; background: #fff; resize: none; outline: 0; }
.eff { height: 22px; margin: 9px 0 0 5px; }
.shadow { font: 900 18px/18px "Open Sans", "Noto Sans", sans-serif; color: #fff; text-shadow: 1px 1px 2px #223; margin-left: 1px; }
.lb { margin: 0 5px; }
.cap { display: block; margin: 6px 0 0 6px; }
.off { color: #8b97ac; margin-top: 9px; }
.an { margin: 3px 0 0 7px; gap: 7px; height: 22px; }
.push, .ghost { width: 99px; height: 22px; }
.push { border: 1px solid #909cb2; border-radius: 2px; background: linear-gradient(#eef1f6, #c9d1df); gap: 3px; }
.tfx { font: bold 16px/18px "Liberation Serif", serif; color: #111; }
.tfx em { font-size: 12px; color: #a8171c; }
.rotc { margin: 9px 0 0 7px; gap: 3px; }
.dis { background: #d9dee7; color: #8b97ac; }
.dis select:disabled { opacity: 1; color: #8b97ac; }
.dis::after { background: #9aa5b8; }

/* timeline */
.timeline { flex: none; height: 264px; padding-top: 31px; display: flex; }
.tl { flex: 1; min-width: 0; display: flex; flex-direction: column; }
.ruler { flex: none; height: 24px; position: relative; background: linear-gradient(#ececec, #c6c6c6); border-bottom: 1px solid #555; }
.played { position: absolute; inset: 0 auto 0 0; width: 160px; background: linear-gradient(#8fc3f4, #7bb1e8); border-right: 2px solid #3296ff; }
.marks { position: relative; display: grid; grid-template-columns: repeat(17, 1fr); width: 568px; margin-left: -6px; font: 7px/9px "Open Sans", sans-serif; color: #6c6f75; }
.marks span { display: flex; flex-direction: column; align-items: center; white-space: nowrap; }
.marks span::before { content: ""; width: 1px; height: 3px; background: #222; }
.marks .major { font-size: 11px; line-height: 14px; color: #111; width: 33px; }
.marks .major::before { height: 9px; }
.tracks { flex: 1; min-height: 0; display: flex; align-items: flex-start; gap: 4px; background: linear-gradient(#7e8ba5, #5e6981); overflow: hidden; }
.group { width: 408px; height: 100%; border: solid #000; border-width: 1px 1px 0 0; border-radius: 0 5px 0 0; background: #bbc6d9; }
.strip { height: 17px; border-bottom: 1px solid #555f72; }
.clip { height: 60px; display: flex; align-items: center; border: 1px solid #000; background: linear-gradient(#bac6d9, #a5b1c6 50%, #7f8ba3); box-shadow: 1px 1px 2px #0008; }
.full { border-left: 0; border-radius: 0 5px 5px 0; margin-bottom: 4px; justify-content: flex-end; }
.dur1 { display: flex; align-items: center; gap: 5px; height: 50px; width: 69px; padding-left: 4px; border-left: 1px dashed #6b7588; }
.lane { height: 64px; background: linear-gradient(#a9b6cc, #97a4ba); border-top: 1px solid #667; border-bottom: 1px solid #667; margin-top: -3px; padding-top: 2px; }
.dark { width: 158px; border-left: 0; border-radius: 0 5px 5px 0; background: linear-gradient(#737983, #4d5361); position: relative; color: #15171c; }
.tend { position: absolute; left: 0; top: 12px; }
.ic { display: flex; flex-direction: column; align-items: center; gap: 8px; width: 16px; margin: 0 9px 0 32px; }
.dark p { margin: 0; width: 25px; overflow: hidden; line-height: 15px; padding-bottom: 2px; }
.dark .dur1 { margin-left: 5px; border-color: #9298a2; }
.next { width: 162px; border-radius: 4px; padding-left: 22px; gap: 12px; position: relative; }
.plus { position: absolute; left: 1px; top: 1px; }
.dur2 { display: flex; align-items: center; gap: 5px; }
.tbar { width: 10px; flex: none; background: #8a92a4; overflow: hidden; display: flex; flex-direction: column; }
.tbar .arr { margin-right: -6px; }
.tbar .vthumb { height: 175px; margin-right: -6px; }
```
